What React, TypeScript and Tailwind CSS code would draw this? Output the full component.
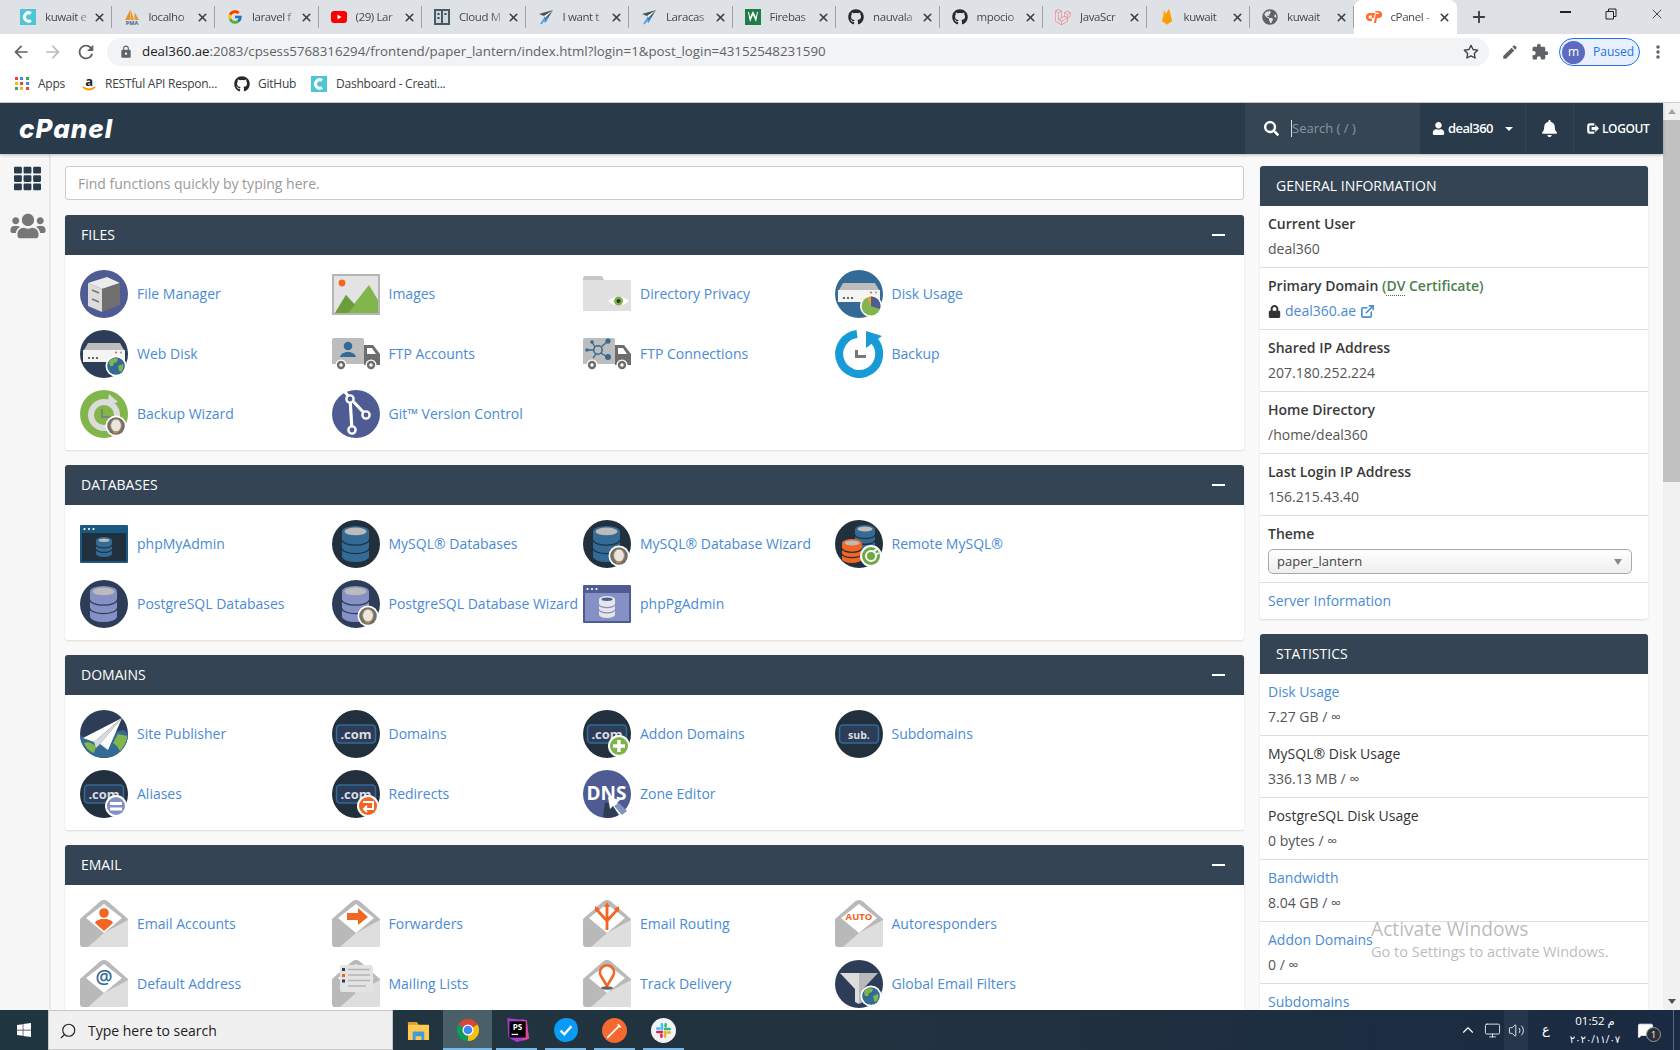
import type { ReactNode } from 'react';
import { FaTh, FaUsers, FaSearch, FaUser, FaBell, FaLock, FaGithub, FaWindows, FaLaravel, FaGlobeAmericas } from 'react-icons/fa';
import { FcGoogle } from 'react-icons/fc';
import { FiExternalLink, FiStar } from 'react-icons/fi';
import { MdEdit, MdExtension, MdMoreVert, MdArrowBack, MdArrowForward, MdRefresh, MdLock } from 'react-icons/md';
import { X, Plus, ChevronUp, Monitor, Volume2, Search, MessageSquare } from 'lucide-react';

const NAVY = '#2e3d57';
const DARK = '#22303d';
const INDIGO = '#4f5b93';
const BLUE = '#336a96';
const PERI = '#8590c4';
const GREEN = '#82b54b';
const ORANGE = '#f26522';

function Ico({ children }: { children: ReactNode }) {
  return (
    <svg viewBox="0 0 48 48" className="w-12 h-12 shrink-0">
      {children}
    </svg>
  );
}

function Disc({ fill }: { fill: string }) {
  return <circle cx="24" cy="24" r="24" fill={fill} />;
}

function Db({ x, y, w, h, body, top, line }: { x: number; y: number; w: number; h: number; body: string; top: string; line: string }) {
  const rx = w / 2;
  const e = w * 0.2;
  const t1 = y + e + (h - 2 * e) / 3;
  const t2 = y + e + ((h - 2 * e) * 2) / 3;
  return (
    <g>
      <path d={`M${x} ${y + e}A${rx} ${e} 0 0 1 ${x + w} ${y + e}V${y + h - e}A${rx} ${e} 0 0 1 ${x} ${y + h - e}Z`} fill={body} />
      <ellipse cx={x + rx} cy={y + e} rx={rx - 2.5} ry={e - 1.5} fill={top} />
      <path d={`M${x} ${t1}A${rx} ${e} 0 0 0 ${x + w} ${t1}M${x} ${t2}A${rx} ${e} 0 0 0 ${x + w} ${t2}`} stroke={line} strokeWidth="1.2" fill="none" />
    </g>
  );
}

function Server() {
  return (
    <g>
      <path d="M8 13H40L44 20H4Z" fill="#bdbdbd" />
      <path d="M3 20H45V32H3Z" fill="#f4f4f4" />
      <circle cx="9" cy="28" r="1.1" fill="#444" />
      <circle cx="13" cy="28" r="1.1" fill="#444" />
      <circle cx="17" cy="28" r="1.1" fill="#444" />
      <circle cx="36" cy="22.5" r="1" fill="#d9534f" />
      <circle cx="41" cy="22.5" r="1" fill={GREEN} />
    </g>
  );
}

function GlobeBadge() {
  return (
    <g>
      <circle cx="36" cy="36" r="10.5" fill="#fff" />
      <circle cx="36" cy="36" r="8.8" fill={BLUE} />
      <path d="M30 30c3-2 6-2 8-1l-1 3-3 1-1 3-3 0c-1-2-1-4 0-6zM38 36l5-2c1 3 0 6-2 8l-2-1z" fill={GREEN} />
    </g>
  );
}

function PieBadge() {
  return (
    <g>
      <circle cx="36" cy="36" r="11" fill="#fff" />
      <circle cx="36" cy="36" r="9.4" fill={GREEN} />
      <path d="M36 36V26.6A9.4 9.4 0 0 1 45 39Z" fill={INDIGO} />
      <path d="M36 36V26.6A9.4 9.4 0 0 0 32 27.5Z" fill="#f0a030" />
    </g>
  );
}

function HeadsetBadge() {
  return (
    <g>
      <circle cx="36" cy="36" r="10.5" fill="#fff" />
      <circle cx="36" cy="36" r="8.8" fill="#6f6f6f" />
      <ellipse cx="36" cy="35.5" rx="5.4" ry="6.4" fill="#e9e6df" stroke="#a98a55" strokeWidth="1" />
      <path d="M33 42.5h5" stroke="#c08a3e" strokeWidth="1.4" />
    </g>
  );
}

function MiniBadge({ fill, children }: { fill: string; children: ReactNode }) {
  return (
    <g transform="translate(-1 -1)">
      <circle cx="37" cy="37" r="11" fill="#fff" />
      <circle cx="37" cy="37" r="9" fill={fill} />
      {children}
    </g>
  );
}

function Com({ label = '.com', size = 13 }: { label?: string; size?: number }) {
  return (
    <g>
      <rect x="4.5" y="15" width="39" height="18" rx="3.5" fill={NAVY} stroke={BLUE} strokeWidth="1.6" />
      <text x="24" y="28.5" textAnchor="middle" fontSize={size} fontWeight="700" fill="#d9dde3" fontFamily="Open Sans, sans-serif">
        {label}
      </text>
    </g>
  );
}

function Truck({ children }: { children: ReactNode }) {
  return (
    <Ico>
      <path d="M2 8H30a2 2 0 0 1 2 2V34H0V10a2 2 0 0 1 2-2Z" fill="#bdbdbd" />
      <path d="M32 15H41L48 24V35H32Z" fill="#6d6d6d" />
      <path d="M35 18H40L44 24H35Z" fill="#fff" />
      <circle cx="9" cy="35" r="5.5" fill="#fff" />
      <circle cx="9" cy="35" r="4.2" fill="#6d6d6d" />
      <circle cx="9" cy="35" r="1.7" fill="#fff" />
      <circle cx="39" cy="35" r="5.5" fill="#fff" />
      <circle cx="39" cy="35" r="4.2" fill="#6d6d6d" />
      <circle cx="39" cy="35" r="1.7" fill="#fff" />
      {children}
    </Ico>
  );
}

function Mail({ children }: { children?: ReactNode }) {
  return (
    <Ico>
      <path d="M0 19 20 1.5a6 6 0 0 1 8 0L48 19V44a3 3 0 0 1-3 3H3a3 3 0 0 1-3-3Z" fill="#b9b9b9" />
      <path d="M24 4 42 18 24 33 6 18Z" fill="#fff" />
      <path d="M48 20V44a3 3 0 0 1-3 3H8L24 33Z" fill="#dedede" />
      {children}
    </Ico>
  );
}

function Folder() {
  return (
    <Ico>
      <path d="M0 8a2 2 0 0 1 2-2H19l2 4H48V40a1 1 0 0 1-1 1H1a1 1 0 0 1-1-1Z" fill="#c6c6c6" />
      <path d="M0 10H48V40a1 1 0 0 1-1 1H1a1 1 0 0 1-1-1Z" fill="#e0e0e0" />
      <path d="M25 31Q35 22 46 31 35 40 25 31Z" fill="#fff" />
      <circle cx="35.5" cy="31" r="4.5" fill={GREEN} />
      <circle cx="35.5" cy="31" r="2" fill="#333" />
    </Ico>
  );
}

const iconMap: Record<string, ReactNode> = {
  fileManager: (
    <Ico>
      <Disc fill={INDIGO} />
      <path d="M8 13 27 7 40 13 22 19Z" fill="#ececec" />
      <path d="M8 13 22 19V42L8 36Z" fill="#dcdcdc" />
      <path d="M22 19 40 13V35L22 42Z" fill="#6f6f6f" />
      <path d="M12 20 19 23M12 29 19 32" stroke="#777" strokeWidth="1.6" />
    </Ico>
  ),
  images: (
    <Ico>
      <rect y="4" width="48" height="41" fill="#b5b5b5" />
      <rect x="2" y="6" width="44" height="37" fill="#e3e3e3" />
      <circle cx="10" cy="13" r="3.4" fill={ORANGE} />
      <path d="M3 43 14 25 22 34 37 15 46 30V43Z" fill={GREEN} />
      <path d="M3 43 14 25 23 35 16 43Z" fill="#6d9c3d" />
    </Ico>
  ),
  dirPrivacy: <Folder />,
  diskUsage: (
    <Ico>
      <Disc fill={BLUE} />
      <Server />
      <PieBadge />
    </Ico>
  ),
  webDisk: (
    <Ico>
      <Disc fill={NAVY} />
      <Server />
      <GlobeBadge />
    </Ico>
  ),
  ftpAccounts: (
    <Truck>
      <circle cx="16" cy="16" r="4.3" fill={BLUE} />
      <path d="M8 27c1-4 4-4 6-5h4c2 1 5 1 6 5Z" fill={BLUE} />
    </Truck>
  ),
  ftpConnections: (
    <Truck>
      <circle cx="15" cy="20" r="4.2" fill="none" stroke={BLUE} strokeWidth="1.5" />
      <path d="M11 20H4M18 17l6-5M18 23l6 4M12 17 9 12M13 24l-3 4" stroke={BLUE} strokeWidth="1.3" />
      <circle cx="25" cy="11" r="2.6" fill={BLUE} />
      <circle cx="25" cy="27" r="3" fill={BLUE} />
      <circle cx="4" cy="20" r="1.8" fill={BLUE} />
      <circle cx="9" cy="12" r="1.8" fill={BLUE} />
    </Truck>
  ),
  backup: (
    <Ico>
      <path d="M22 4.100A20 20 0 1 0 38 9.500" fill="none" stroke="#179bd7" strokeWidth="8" />
      <path d="M31 1 47 6 31 18Z" fill="#179bd7" />
      <path d="M21.500 20V26.500H31" fill="none" stroke="#777" strokeWidth="3" />
    </Ico>
  ),
  backupWizard: (
    <Ico>
      <Disc fill={GREEN} />
      <circle cx="24" cy="25" r="13" fill="none" stroke="#dcdcdc" strokeWidth="6" />
      <path d="M29 4 38 12 27 15Z" fill="#dcdcdc" />
      <path d="M22 19V27H31" fill="none" stroke="#777" strokeWidth="1.6" />
      <HeadsetBadge />
    </Ico>
  ),
  git: (
    <Ico>
      <Disc fill={INDIGO} />
      <path d="M13 2 18 8 20 40M18 8 34 25" stroke="#fff" strokeWidth="3.2" fill="none" />
      <circle cx="18" cy="9" r="3.6" fill={INDIGO} stroke="#fff" strokeWidth="2.4" />
      <circle cx="34" cy="25" r="3.6" fill={INDIGO} stroke="#fff" strokeWidth="2.4" />
      <circle cx="20" cy="40" r="3.6" fill={INDIGO} stroke="#fff" strokeWidth="2.4" />
    </Ico>
  ),
  phpMyAdmin: (
    <Ico>
      <rect y="5" width="48" height="38" rx="1" fill="#1b5a80" />
      <rect x="2" y="13" width="44" height="28" fill={DARK} />
      <circle cx="4.500" cy="9" r="1.100" fill="#fff" />
      <circle cx="9" cy="9" r="1.100" fill="#fff" />
      <circle cx="13.500" cy="9" r="1.100" fill="#fff" />
      <Db x={16} y={17} w={16} h={20} body={BLUE} top="#bbb" line={DARK} />
    </Ico>
  ),
  mysql: (
    <Ico>
      <Disc fill={DARK} />
      <Db x={10} y={6} w={27} h={36} body={BLUE} top="#bbb" line={DARK} />
    </Ico>
  ),
  mysqlWizard: (
    <Ico>
      <Disc fill={DARK} />
      <Db x={10} y={6} w={27} h={36} body={BLUE} top="#bbb" line={DARK} />
      <HeadsetBadge />
    </Ico>
  ),
  remoteMysql: (
    <Ico>
      <Disc fill={DARK} />
      <Db x={20} y={5} w={20} h={25} body={BLUE} top="#bbb" line={DARK} />
      <Db x={7} y={19} w={20} h={24} body={ORANGE} top="#bbb" line={DARK} />
      <MiniBadge fill="#6ea843">
        <circle cx="37" cy="37" r="5" fill="none" stroke="#fff" strokeWidth="2" />
        <path d="M39 33l4-3M41 36l4-2" stroke="#fff" strokeWidth="1.800" />
      </MiniBadge>
    </Ico>
  ),
  postgres: (
    <Ico>
      <Disc fill={NAVY} />
      <Db x={10} y={6} w={27} h={36} body={PERI} top="#bbb" line={NAVY} />
    </Ico>
  ),
  postgresWizard: (
    <Ico>
      <Disc fill={NAVY} />
      <Db x={10} y={6} w={27} h={36} body={PERI} top="#bbb" line={NAVY} />
      <HeadsetBadge />
    </Ico>
  ),
  phpPgAdmin: (
    <Ico>
      <rect y="5" width="48" height="38" rx="1" fill={INDIGO} />
      <rect x="2" y="13" width="44" height="28" fill={PERI} />
      <circle cx="4.500" cy="9" r="1.100" fill="#fff" />
      <circle cx="9" cy="9" r="1.100" fill="#fff" />
      <circle cx="13.500" cy="9" r="1.100" fill="#fff" />
      <Db x={16} y={16} w={16} h={22} body="#e6e6e6" top={INDIGO} line={PERI} />
    </Ico>
  ),
  sitePublisher: (
    <Ico>
      <Disc fill={NAVY} />
      <path d="M0 24A24 24 0 0 0 48 24L44 20 4 28Z" fill={BLUE} />
      <path d="M4 33c4-2 9 0 12 4l-2 6C9 41 6 38 4 33ZM38 24l9 2c0 6-3 11-7 15l-3-5-4-3Z" fill={GREEN} />
      <path d="M42 8 3 28 14 32Z" fill="#fff" />
      <path d="M42 8 14 32 16 38 20 34Z" fill="#d9d9d9" />
      <path d="M42 8 20 34 28 40Z" fill="#fff" />
    </Ico>
  ),
  domains: (
    <Ico>
      <Disc fill={DARK} />
      <Com />
    </Ico>
  ),
  addon: (
    <Ico>
      <Disc fill={DARK} />
      <Com />
      <MiniBadge fill="#7db347">
        <path d="M37 31V43M31 37H43" stroke="#fff" strokeWidth="3.400" />
      </MiniBadge>
    </Ico>
  ),
  subdomains: (
    <Ico>
      <Disc fill={DARK} />
      <Com label="sub." size={10.5} />
    </Ico>
  ),
  aliases: (
    <Ico>
      <Disc fill={DARK} />
      <Com />
      <MiniBadge fill={PERI}>
        <path d="M31 34.500H43M31 40H43" stroke="#fff" strokeWidth="3" />
      </MiniBadge>
    </Ico>
  ),
  redirects: (
    <Ico>
      <Disc fill={DARK} />
      <Com />
      <MiniBadge fill={ORANGE}>
        <path d="M32 33H42V40H33M36 37l-3 3 3 3" stroke="#fff" strokeWidth="2" fill="none" />
      </MiniBadge>
    </Ico>
  ),
  zone: (
    <Ico>
      <Disc fill={INDIGO} />
      <path d="M22 32 42 40A24 24 0 0 1 24 48L20 47Z" fill={NAVY} />
      <text x="23.500" y="30" textAnchor="middle" fontSize="19" fontWeight="700" fill="#fff" fontFamily="Open Sans, sans-serif">
        DNS
      </text>
      <path d="M25 27 27 39 30 36 36 45 41 41 34 33 37 30Z" fill="#fff" />
      <path d="M31 36 36 33 44 41 39 45Z" fill={PERI} />
    </Ico>
  ),
  emailAccounts: (
    <Mail>
      <circle cx="24" cy="13" r="4.800" fill={ORANGE} />
      <path d="M15 23c1-3 4-3 6-4h6c2 1 5 1 6 4l-9 8Z" fill={ORANGE} />
    </Mail>
  ),
  forwarders: (
    <Mail>
      <path d="M15 13H26V8L36 17 26 25V20H15Z" fill={ORANGE} />
    </Mail>
  ),
  emailRouting: (
    <Mail>
      <path d="M24 6V30M14 10 24 21 34 10" stroke={ORANGE} strokeWidth="2.800" fill="none" />
      <path d="M24 2l-3 5h6ZM12 6l0 6 5-3ZM36 6l0 6-5-3Z" fill={ORANGE} />
    </Mail>
  ),
  auto: (
    <Mail>
      <text x="24" y="20" textAnchor="middle" fontSize="9.500" fontWeight="700" fill={ORANGE} fontFamily="Open Sans, sans-serif">
        AUTO
      </text>
    </Mail>
  ),
  defaultAddress: (
    <Mail>
      <text x="24" y="24" textAnchor="middle" fontSize="19" fontWeight="600" fill={BLUE} fontFamily="Open Sans, sans-serif">
        @
      </text>
    </Mail>
  ),
  mailingLists: (
    <Mail>
      <rect x="8" y="5" width="33" height="27" rx="2" fill="#e3e3e3" />
      <path d="M16 9.500H38M16 15H38M16 20.500H38M16 26H34" stroke="#b5b5b5" strokeWidth="1.400" />
      <rect x="10" y="8" width="3" height="3" fill={NAVY} />
      <rect x="10" y="14" width="3" height="3" fill={ORANGE} />
      <rect x="10" y="19.500" width="3" height="3" fill={NAVY} />
    </Mail>
  ),
  trackDelivery: (
    <Mail>
      <path d="M24 26 18 16a7 7 0 1 1 12 0Z" fill="none" stroke={ORANGE} strokeWidth="2.600" />
      <ellipse cx="24" cy="28" rx="6" ry="1.800" fill="#666" />
    </Mail>
  ),
  filters: (
    <Ico>
      <Disc fill={NAVY} />
      <path d="M5 13H24V44L20 42V29Z" fill="#dcdcdc" />
      <path d="M43 13H24V44L28 42V29Z" fill="#b9b9b9" />
      <GlobeBadge />
    </Ico>
  ),
};

type Item = { icon: string; label: string };

const sections: { title: string; items: Item[] }[] = [
  {
    title: 'Files',
    items: [
      { icon: 'fileManager', label: 'File Manager' },
      { icon: 'images', label: 'Images' },
      { icon: 'dirPrivacy', label: 'Directory Privacy' },
      { icon: 'diskUsage', label: 'Disk Usage' },
      { icon: 'webDisk', label: 'Web Disk' },
      { icon: 'ftpAccounts', label: 'FTP Accounts' },
      { icon: 'ftpConnections', label: 'FTP Connections' },
      { icon: 'backup', label: 'Backup' },
      { icon: 'backupWizard', label: 'Backup Wizard' },
      { icon: 'git', label: 'Git™ Version Control' },
    ],
  },
  {
    title: 'Databases',
    items: [
      { icon: 'phpMyAdmin', label: 'phpMyAdmin' },
      { icon: 'mysql', label: 'MySQL® Databases' },
      { icon: 'mysqlWizard', label: 'MySQL® Database Wizard' },
      { icon: 'remoteMysql', label: 'Remote MySQL®' },
      { icon: 'postgres', label: 'PostgreSQL Databases' },
      { icon: 'postgresWizard', label: 'PostgreSQL Database Wizard' },
      { icon: 'phpPgAdmin', label: 'phpPgAdmin' },
    ],
  },
  {
    title: 'Domains',
    items: [
      { icon: 'sitePublisher', label: 'Site Publisher' },
      { icon: 'domains', label: 'Domains' },
      { icon: 'addon', label: 'Addon Domains' },
      { icon: 'subdomains', label: 'Subdomains' },
      { icon: 'aliases', label: 'Aliases' },
      { icon: 'redirects', label: 'Redirects' },
      { icon: 'zone', label: 'Zone Editor' },
    ],
  },
  {
    title: 'Email',
    items: [
      { icon: 'emailAccounts', label: 'Email Accounts' },
      { icon: 'forwarders', label: 'Forwarders' },
      { icon: 'emailRouting', label: 'Email Routing' },
      { icon: 'auto', label: 'Autoresponders' },
      { icon: 'defaultAddress', label: 'Default Address' },
      { icon: 'mailingLists', label: 'Mailing Lists' },
      { icon: 'trackDelivery', label: 'Track Delivery' },
      { icon: 'filters', label: 'Global Email Filters' },
    ],
  },
];

function Fav({ children }: { children: ReactNode }) {
  return (
    <svg viewBox="0 0 16 16" className="w-4 h-4 shrink-0">
      {children}
    </svg>
  );
}

const cpLogoTeal = (
  <Fav>
    <rect width="16" height="16" fill="#4dc6d6" />
    <path d="M11 4.500A4.200 4.200 0 1 0 11 11.500" fill="none" stroke="#fff" strokeWidth="3" />
  </Fav>
);

const planeFav = (
  <Fav>
    <path d="M15 1 1 5l5 2 1 7Z" fill="#45525f" />
    <path d="M15 1 6 7l1 2Z" fill="#fff" />
    <path d="M7 9 3 15M10 8l-3 5" stroke="#3d9be9" strokeWidth="1.500" />
  </Fav>
);

const tabs: { title: string; icon: ReactNode }[] = [
  { title: 'kuwait e', icon: cpLogoTeal },
  {
    title: 'localho',
    icon: (
      <Fav>
        <path d="M1 11 6 1V11ZM6.500 11V0L10 11ZM10.500 11V3L15 11Z" fill="#e8952f" />
        <text x="8" y="16" textAnchor="middle" fontSize="5.500" fontWeight="700" fill="#45628c" fontFamily="Open Sans, sans-serif">
          PMA
        </text>
      </Fav>
    ),
  },
  { title: 'laravel f', icon: <FcGoogle className="w-4 h-4 shrink-0" /> },
  {
    title: '(29) Lar',
    icon: (
      <Fav>
        <rect y="2" width="16" height="12" rx="3" fill="#f00" />
        <path d="M6.500 5.500 10.500 8l-4 2.500Z" fill="#fff" />
      </Fav>
    ),
  },
  {
    title: 'Cloud M',
    icon: (
      <Fav>
        <rect width="16" height="16" fill="#455a64" />
        <path d="M2 2h5v12H2ZM9 2h5v12H9Z" fill="#cfd8dc" />
        <path d="M3.500 4h2v2h-2ZM3.500 8h2v2h-2ZM10.500 4h2v2h-2Z" fill="#37474f" />
      </Fav>
    ),
  },
  { title: 'I want t', icon: planeFav },
  { title: 'Laracas', icon: planeFav },
  {
    title: 'Firebas',
    icon: (
      <Fav>
        <rect width="16" height="16" fill="#1e7d47" />
        <path d="M3 3l2 10 3-7 3 7 2-10-1 0-1 5-3-6-3 6-1-5Z" fill="#fff" />
      </Fav>
    ),
  },
  { title: 'nauvala', icon: <FaGithub className="w-4 h-4 shrink-0 text-[#24292e]" /> },
  { title: 'mpocio', icon: <FaGithub className="w-4 h-4 shrink-0 text-[#24292e]" /> },
  { title: 'JavaScr', icon: <FaLaravel className="w-4 h-4 shrink-0 text-[#ef6c6c]" /> },
  {
    title: 'kuwait',
    icon: (
      <Fav>
        <path d="M3 12 5 1l2.500 4L10 0l3 12-5 3.500Z" fill="#ffb300" />
        <path d="M3 12 10 0l3 12-5 3.500Z" fill="#f59e0b" />
      </Fav>
    ),
  },
  { title: 'kuwait', icon: <FaGlobeAmericas className="w-4 h-4 shrink-0 text-[#5f6368]" /> },
];

function Tab({ title, icon, active }: { title: string; icon: ReactNode; active?: boolean }) {
  return (
    <div className={active ? 'relative flex items-center w-[103.5px] h-[34px] pl-3 pr-[6px] bg-white rounded-t-lg' : 'relative flex items-center w-[103.5px] h-[34px] pl-3 pr-[6px]'}>
      {icon}
      <span className="ml-[9px] flex-1 whitespace-nowrap text-[11.5px] text-[#45494d] tracking-[-0.4px] [mask-image:linear-gradient(to_right,black_72%,rgba(0,0,0,0.25))]">{title}</span>
      <X className="w-[13px] h-[13px] text-[#3c4043] shrink-0 ml-1" strokeWidth={3} />
      {!active && <span className="absolute right-0 top-[6px] bottom-[6px] w-px bg-[#9ea1a5]" />}
    </div>
  );
}

function ChromeLogo({ size = 'w-6 h-6' }: { size?: string }) {
  return (
    <svg viewBox="0 0 24 24" className={size}>
      <path d="M12 12 2.470 6.500A11 11 0 0 1 21.530 6.500Z" fill="#db4437" />
      <path d="M12 12 21.530 6.500A11 11 0 0 1 12 23Z" fill="#f4c20d" />
      <path d="M12 12V23A11 11 0 0 1 2.470 6.500Z" fill="#0f9d58" />
      <circle cx="12" cy="12" r="5.500" fill="#fff" />
      <circle cx="12" cy="12" r="4.300" fill="#4285f4" />
    </svg>
  );
}

function BrowserChrome() {
  return (
    <div className="shrink-0 [font-family:'Open_Sans',sans-serif]">
      <div className="flex items-center h-[34px] pl-2 bg-[#dee1e6]">
        {tabs.map((t, idx) => (
          <Tab key={idx} title={t.title} icon={t.icon} />
        ))}
        <Tab
          active
          title="cPanel -"
          icon={
            <Fav>
              <path d="M7 4H4a4 4 0 0 0 0 8h2V9.500H4a1.500 1.500 0 0 1 0-3h2.200L5.500 9h2.300L9 4Z" fill="#ff6c2c" />
              <path d="M9.500 2h3a3.500 3.500 0 0 1 0 7H11l-1 5H7.800l2-9h2.700a1 1 0 0 0 0-1.500H9Z" fill="#ff6c2c" />
            </Fav>
          }
        />
        <Plus className="w-[18px] h-[18px] ml-[13px] text-[#3c4043]" strokeWidth={2.5} />
        <div className="ml-auto flex items-center h-full">
          <div className="flex justify-center w-[46px]"><div className="w-[11px] h-[1.5px] bg-[#222] -mt-[6px]" /></div>
          <div className="flex justify-center w-[46px]">
            <svg viewBox="0 0 12 12" className="w-3 h-3 -mt-[6px]">
              <path d="M3.500 3V1H11V8.500H9M1 3.500H8.500V11H1Z" fill="none" stroke="#222" strokeWidth="1" />
            </svg>
          </div>
          <div className="flex justify-center w-[46px]"><X className="w-4 h-4 text-[#222] -mt-[6px]" strokeWidth={1.2} /></div>
        </div>
      </div>
      <div className="flex items-center h-[34px] pt-[2px] bg-white">
        <MdArrowBack className="w-5 h-5 ml-[11px] text-[#5f6368]" />
        <MdArrowForward className="w-5 h-5 ml-3 text-[#babcbe]" />
        <MdRefresh className="w-[22px] h-[22px] ml-3 text-[#5f6368]" />
        <div className="flex items-center flex-1 h-7 ml-[10px] pl-3 pr-[10px] rounded-full bg-[#f1f3f4] text-[13.3px]">
          <MdLock className="w-[14px] h-[14px] text-[#5f6368]" />
          <span className="ml-[9px] text-[#202124] whitespace-nowrap">
            deal360.ae<span className="text-[#5f6368]">:2083/cpsess5768316294/frontend/paper_lantern/index.html?login=1&amp;post_login=43152548231590</span>
          </span>
          <FiStar className="w-4 h-4 ml-auto text-[#3c4043]" />
        </div>
        <MdEdit className="w-[18px] h-[18px] ml-3 text-[#5f6368]" />
        <MdExtension className="w-[18px] h-[18px] ml-3 text-[#5f6368]" />
        <div className="flex items-center w-[81px] h-7 ml-[10px] pl-[2px] rounded-full border border-[#1a73e8] bg-[#e8f0fe]">
          <div className="flex items-center justify-center w-[23px] h-[23px] rounded-full bg-[#5c6bc0] text-white text-xs">m</div>
          <span className="ml-2 text-xs text-[#1a73e8]">Paused</span>
        </div>
        <MdMoreVert className="w-5 h-5 ml-2 mr-3 text-[#5f6368]" />
      </div>
      <div className="flex items-center h-[35px] pb-[3px] border-b border-[#cfcfcf] bg-white text-xs text-[#3c4043] tracking-[-0.25px]">
        <div className="grid grid-cols-3 gap-[2px] w-[14px] h-[14px] ml-[15px]">
          {['#ea4335', '#4285f4', '#34a853', '#fbbc05', '#ea4335', '#4285f4', '#34a853', '#fbbc05', '#ea4335'].map((c, idx) => (
            <span key={idx} className="w-[3px] h-[3px]" style={{ background: c }} />
          ))}
        </div>
        <span className="ml-[9px]">Apps</span>
        <span className="relative flex justify-center w-4 ml-4 text-[13px] font-bold text-[#222] leading-none pb-1">
          a
          <svg viewBox="0 0 16 6" className="absolute left-0 top-[11px] w-4 h-[6px]">
            <path d="M2 1Q8 6 14 1" stroke="#f90" strokeWidth="1.800" fill="none" />
          </svg>
        </span>
        <span className="ml-2 w-[112px] whitespace-nowrap">RESTful API Respon...</span>
        <FaGithub className="w-4 h-4 ml-[17px] text-[#24292e]" />
        <span className="ml-2">GitHub</span>
        <span className="ml-[15px]">{cpLogoTeal}</span>
        <span className="ml-[9px]">Dashboard - Creati...</span>
      </div>
    </div>
  );
}

function CpanelHeader() {
  return (
    <header className="relative z-10 flex items-stretch h-[51px] bg-[#293a4a] text-white shadow-[0_1px_3px_rgba(0,0,0,0.25)]">
      <div className="flex items-center pl-[19px] text-[26px] font-extrabold italic tracking-[1px] leading-none [font-family:'Inter',sans-serif]">cPanel</div>
      <div className="ml-auto flex items-center w-[175px] pl-[19px] bg-[#364554] border-r border-[#33434f]">
        <FaSearch className="w-[15px] h-[15px] text-white" />
        <span className="ml-[12px] h-[17px] border-l border-[#ddd] text-[13px] leading-[17px] text-[#8a95a0]">Search ( / )</span>
      </div>
      <div className="flex items-center w-[106px] pl-3 border-r border-[#33434f] text-[13px] font-semibold tracking-[-0.6px]">
        <FaUser className="w-[13px] h-[13px]" />
        <span className="ml-[3px]">deal360</span>
        <span className="ml-3 border-x-[4px] border-x-transparent border-t-[4px] border-t-white" />
      </div>
      <div className="flex items-center justify-center w-12 border-r border-[#33434f]">
        <FaBell className="w-[15px] h-[17px]" />
      </div>
      <div className="flex items-center w-[89px] pl-3 text-xs font-semibold tracking-[-0.4px]">
        <svg viewBox="0 0 14 14" className="w-[13px] h-[13px]">
          <path d="M9 2.500H4a1.500 1.500 0 0 0-1.500 1.500V10A1.500 1.500 0 0 0 4 11.500H9" stroke="#fff" strokeWidth="2.400" fill="none" />
          <path d="M6 5.500H10V3L14 7 10 11V8.500H6Z" fill="#fff" />
        </svg>
        <span className="ml-[3px]">LOGOUT</span>
      </div>
    </header>
  );
}

function Feature({ item }: { item: Item }) {
  return (
    <a className="flex items-center h-12 gap-[9px] text-sm text-[#4a8bd4] whitespace-nowrap">
      {iconMap[item.icon]}
      <span>{item.label}</span>
    </a>
  );
}

function Section({ title, items }: { title: string; items: Item[] }) {
  return (
    <section className="mb-[15px] rounded-[3px] bg-white shadow-[0_1px_2px_rgba(0,0,0,0.12)]">
      <div className="flex items-center justify-between h-10 pl-[16px] pr-[19px] rounded-t-[3px] bg-[#344454] text-sm text-white uppercase">
        <span>{title}</span>
        <span className="w-[13px] h-[2px] bg-white" />
      </div>
      <div className="grid grid-cols-[repeat(4,251.5px)] gap-y-3 pt-[15px] pb-3 pl-[15px]">
        {items.map((item) => (
          <Feature key={item.label} item={item} />
        ))}
      </div>
    </section>
  );
}

function InfoRow({ label, children, link }: { label: ReactNode; children: ReactNode; link?: boolean }) {
  return (
    <div className="px-2 pt-2 pb-2 border-b border-[#ddd] last:border-b-0">
      <div className={link ? 'mb-[5px] leading-5 text-[#4a8bd4]' : 'mb-[5px] leading-5 text-[#333]'}>{label}</div>
      <div className="leading-5 text-[#555]">{children}</div>
    </div>
  );
}

function SideHeader({ title }: { title: string }) {
  return <div className="flex items-center h-10 pl-4 rounded-t-[3px] bg-[#344454] text-sm text-white uppercase">{title}</div>;
}

function RightColumn() {
  return (
    <aside className="w-[388px] shrink-0 text-sm">
      <div className="mb-[15px] rounded-[3px] bg-white shadow-[0_1px_2px_rgba(0,0,0,0.12)]">
        <SideHeader title="General Information" />
        <InfoRow label={<span className="font-semibold text-[#3a3a3a]">Current User</span>}>deal360</InfoRow>
        <InfoRow
          label={
            <span className="font-semibold text-[#3a3a3a]">
              Primary Domain{' '}
              <span className="text-[#4c7f4d]">
                (<span className="border-b border-dotted border-[#3c763d]">DV</span> Certificate)
              </span>
            </span>
          }
        >
          <span className="flex items-center">
            <FaLock className="w-[13px] h-[13px] text-[#333]" />
            <span className="ml-[4px] text-[#4a8bd4]">deal360.ae</span>
            <FiExternalLink className="w-[15px] h-[15px] ml-[4px] text-[#4a8bd4]" strokeWidth={2.6} />
          </span>
        </InfoRow>
        <InfoRow label={<span className="font-semibold text-[#3a3a3a]">Shared IP Address</span>}>207.180.252.224</InfoRow>
        <InfoRow label={<span className="font-semibold text-[#3a3a3a]">Home Directory</span>}>/home/deal360</InfoRow>
        <InfoRow label={<span className="font-semibold text-[#3a3a3a]">Last Login IP Address</span>}>156.215.43.40</InfoRow>
        <div className="px-2 pt-2 pb-2 border-b border-[#ddd]">
          <div className="mb-[5px] leading-5 font-semibold text-[#3a3a3a]">Theme</div>
          <div className="flex items-center justify-between w-[364px] h-[25px] pl-2 pr-[9px] rounded-[5px] border border-[#aaa] bg-gradient-to-b from-white to-[#eee] text-[13px] text-[#444]">
            <span>paper_lantern</span>
            <span className="border-x-[4px] border-x-transparent border-t-[6px] border-t-[#888]" />
          </div>
        </div>
        <div className="px-2 py-2 leading-5 text-[#4a8bd4]">Server Information</div>
      </div>
      <div className="rounded-t-[3px] bg-white shadow-[0_1px_2px_rgba(0,0,0,0.12)]">
        <SideHeader title="Statistics" />
        <InfoRow link label="Disk Usage">7.27 GB / ∞</InfoRow>
        <InfoRow label={<span className="text-[#333]">MySQL® Disk Usage</span>}>336.13 MB / ∞</InfoRow>
        <InfoRow label={<span className="text-[#333]">PostgreSQL Disk Usage</span>}>0 bytes / ∞</InfoRow>
        <InfoRow link label="Bandwidth">8.04 GB / ∞</InfoRow>
        <InfoRow link label="Addon Domains">0 / ∞</InfoRow>
        <InfoRow link label="Subdomains">0 / ∞</InfoRow>
      </div>
    </aside>
  );
}

function Scrollbar() {
  return (
    <div className="flex flex-col items-center w-[17px] shrink-0 bg-[#f1f1f1]">
      <div className="flex items-center justify-center h-[17px]">
        <span className="border-x-[4px] border-x-transparent border-b-[5px] border-b-[#a3a3a3]" />
      </div>
      <div className="w-full h-[362px] bg-[#c1c1c1]" />
      <div className="flex items-center justify-center h-[17px] mt-auto">
        <span className="border-x-[4px] border-x-transparent border-t-[5px] border-t-[#505050]" />
      </div>
    </div>
  );
}

function TaskIcon({ children, active, bar = true }: { children: ReactNode; active?: boolean; bar?: boolean }) {
  return (
    <div className={active ? 'relative flex items-center justify-center w-[49px] h-full bg-[#4a6068]' : 'relative flex items-center justify-center w-[49px] h-full'}>
      {children}
      {bar && <span className={active ? 'absolute bottom-0 inset-x-0 h-[2px] bg-[#76b9ed]' : 'absolute bottom-0 inset-x-1 h-[2px] bg-[#76b9ed]'} />}
    </div>
  );
}

function Taskbar() {
  return (
    <div className="flex items-center shrink-0 h-10 bg-gradient-to-r from-[#1f3641] via-[#22323f] to-[#1a2a42] text-white [font-family:'Open_Sans',sans-serif]">
      <div className="flex items-center justify-center w-12 h-full">
        <FaWindows className="w-4 h-4" />
      </div>
      <div className="flex items-center w-[345px] h-full pl-[10px] pt-px border border-[#c8c8c8] bg-[#f0f0f0] text-sm text-[#222]">
        <Search className="w-[18px] h-[18px] -scale-x-100" strokeWidth={1.5} />
        <span className="ml-[11px]">Type here to search</span>
      </div>
      <div className="flex items-center h-full ml-px">
        <TaskIcon bar={false}>
          <svg viewBox="0 0 24 24" className="w-[23px] h-[23px]">
            <path d="M1 3h9l2 3h11v16H1Z" fill="#ffca4f" />
            <path d="M1 3h9l2 3H1Z" fill="#d8a12d" />
            <path d="M6 13h12v9h-3v-4H9v4H6Z" fill="#3f9ae0" />
          </svg>
        </TaskIcon>
        <TaskIcon active>
          <ChromeLogo />
        </TaskIcon>
        <TaskIcon>
          <svg viewBox="0 0 24 24" className="w-[26px] h-[26px]">
            <path d="M3 1 21 3 23 20 12 23 4 19Z" fill="#a33bd1" />
            <path d="M16 2 21 3 23 20 17 22Z" fill="#e0449e" />
            <rect x="5" y="4" width="15" height="15" fill="#000" />
            <text x="12.500" y="12" textAnchor="middle" fontSize="7.500" fontWeight="700" fill="#fff" fontFamily="Open Sans, sans-serif">PS</text>
            <rect x="7" y="15.500" width="6" height="1.200" fill="#fff" />
          </svg>
        </TaskIcon>
        <TaskIcon>
          <svg viewBox="0 0 24 24" className="w-[26px] h-[26px]">
            <path d="M12 1C19 1 23 5 23 12C23 19 18 23 11 23C5 23 1 18 1 12C1 6 6 1 12 1Z" fill="#0a9bf5" />
            <path d="M7 12.500 10.500 16 17 8.500" stroke="#fff" strokeWidth="2.200" fill="none" />
          </svg>
        </TaskIcon>
        <TaskIcon>
          <svg viewBox="0 0 24 24" className="w-[25px] h-[25px]">
            <circle cx="12" cy="12" r="12" fill="#f4692f" />
            <path d="M5 19 17 7M15 6l3 3" stroke="#fff" strokeWidth="1.600" />
          </svg>
        </TaskIcon>
        <TaskIcon>
          <svg viewBox="0 0 24 24" className="w-[25px] h-[25px]">
            <circle cx="12" cy="12" r="12" fill="#f2f2f2" />
            <path d="M6 13.500H10.500M10 18V16" stroke="#e01e5a" strokeWidth="2.400" strokeLinecap="round" />
            <path d="M10.500 6V10.500M6 10H8" stroke="#36c5f0" strokeWidth="2.400" strokeLinecap="round" />
            <path d="M13.500 10.500H18M14 6V8" stroke="#2eb67d" strokeWidth="2.400" strokeLinecap="round" />
            <path d="M13.500 13.500V18M16 14H18" stroke="#ecb22e" strokeWidth="2.400" strokeLinecap="round" />
          </svg>
        </TaskIcon>
      </div>
      <div className="ml-auto flex items-center h-full">
        <span className="flex justify-center w-6"><ChevronUp className="w-[18px] h-[18px]" strokeWidth={1.5} /></span>
        <span className="flex justify-center w-6"><Monitor className="w-[17px] h-[17px]" strokeWidth={1.2} /></span>
        <span className="flex items-center justify-center w-6 h-full bg-[#26364c]"><Volume2 className="w-[17px] h-[17px]" strokeWidth={1.2} /></span>
        <span className="w-9 text-center text-[13px] [font-family:'DejaVu_Sans',sans-serif]">ع</span>
        <div className="flex flex-col items-center w-[62px] text-[11.5px] leading-[18px] [font-family:'Open_Sans','DejaVu_Sans',sans-serif]">
          <span>01:52 م</span>
          <span className="whitespace-nowrap text-[10px] tracking-[-0.4px]">٢٠٢٠/١١/٠٧</span>
        </div>
        <span className="relative flex justify-center w-[38px]">
          <MessageSquare className="w-[17px] h-[17px] fill-white" strokeWidth={1} />
          <span className="absolute left-[20px] top-[5px] w-[15px] h-[15px] rounded-full border border-[#999] bg-[#2b2f36] text-[9px] leading-[13px] text-center">1</span>
        </span>
        <span className="w-[7px] h-full ml-[9px] border-l border-[#5d6776]" />
      </div>
    </div>
  );
}

export default function App() {
  return (
    <div className="relative flex flex-col w-[1680px] h-[1050px] overflow-hidden bg-white [font-family:'Open_Sans',sans-serif]">
      <BrowserChrome />
      <div className="flex flex-1 min-h-0">
        <div className="flex flex-col flex-1 min-w-0">
          <CpanelHeader />
          <div className="flex flex-1 min-h-0 bg-[#f9f9f9]">
            <nav className="flex flex-col items-center w-[49px] shrink-0 pt-[11px] pl-[6px] gap-5 bg-[#f6f6f6] shadow-[1px_0_2px_rgba(0,0,0,0.12)]">
              <FaTh className="w-[29px] h-[27px] text-[#293a4a]" />
              <FaUsers className="w-[36px] h-[28px] text-[#777]" />
            </nav>
            <main className="flex flex-1 gap-4 min-w-0 pl-4 pt-3 overflow-hidden">
              <div className="w-[1179px] shrink-0">
                <div className="flex items-center h-[34px] mb-[15px] pl-[12px] pt-[2px] rounded-[3px] border border-[#ccc] bg-white text-sm text-[#999]">
                  Find functions quickly by typing here.
                </div>
                {sections.map((s) => (
                  <Section key={s.title} title={s.title} items={s.items} />
                ))}
              </div>
              <RightColumn />
            </main>
          </div>
        </div>
        <Scrollbar />
      </div>
      <Taskbar />
      <div className="absolute left-[1371px] top-[915px] text-[#9d9d9d]/70 pointer-events-none">
        <div className="text-[19.2px] leading-7">Activate Windows</div>
        <div className="text-[14.5px] leading-5 -mt-px">Go to Settings to activate Windows.</div>
      </div>
    </div>
  );
}
